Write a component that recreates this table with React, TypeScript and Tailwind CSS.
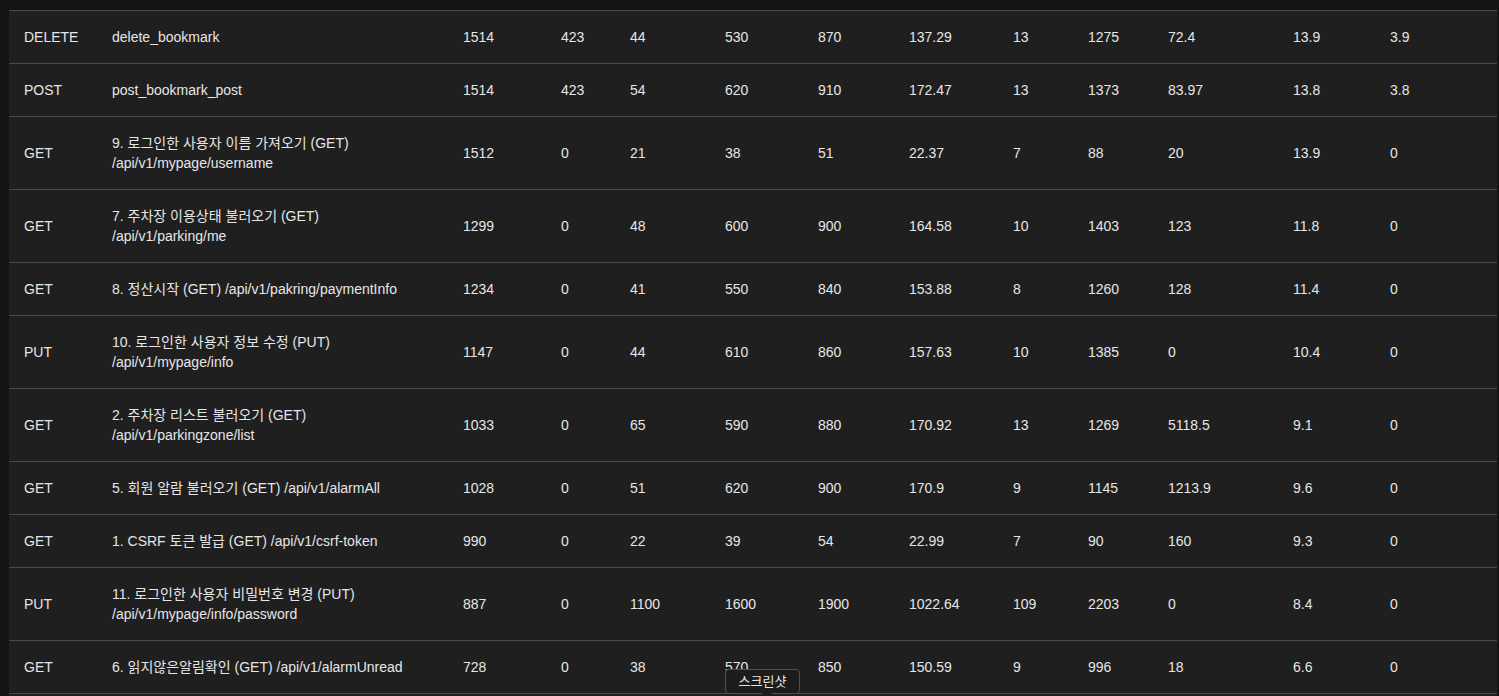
import React from "react";

type Row = { m: string; name: string[]; v: string[] };

const rows: Row[] = [
  { m: "DELETE", name: ["delete_bookmark"], v: ["1514", "423", "44", "530", "870", "137.29", "13", "1275", "72.4", "13.9", "3.9"] },
  { m: "POST", name: ["post_bookmark_post"], v: ["1514", "423", "54", "620", "910", "172.47", "13", "1373", "83.97", "13.8", "3.8"] },
  { m: "GET", name: ["9. 로그인한 사용자 이름 가져오기 (GET)", "/api/v1/mypage/username"], v: ["1512", "0", "21", "38", "51", "22.37", "7", "88", "20", "13.9", "0"] },
  { m: "GET", name: ["7. 주차장 이용상태 불러오기 (GET)", "/api/v1/parking/me"], v: ["1299", "0", "48", "600", "900", "164.58", "10", "1403", "123", "11.8", "0"] },
  { m: "GET", name: ["8. 정산시작 (GET) /api/v1/pakring/paymentInfo"], v: ["1234", "0", "41", "550", "840", "153.88", "8", "1260", "128", "11.4", "0"] },
  { m: "PUT", name: ["10. 로그인한 사용자 정보 수정 (PUT)", "/api/v1/mypage/info"], v: ["1147", "0", "44", "610", "860", "157.63", "10", "1385", "0", "10.4", "0"] },
  { m: "GET", name: ["2. 주차장 리스트 불러오기 (GET)", "/api/v1/parkingzone/list"], v: ["1033", "0", "65", "590", "880", "170.92", "13", "1269", "5118.5", "9.1", "0"] },
  { m: "GET", name: ["5. 회원 알람 불러오기 (GET) /api/v1/alarmAll"], v: ["1028", "0", "51", "620", "900", "170.9", "9", "1145", "1213.9", "9.6", "0"] },
  { m: "GET", name: ["1. CSRF 토큰 발급 (GET) /api/v1/csrf-token"], v: ["990", "0", "22", "39", "54", "22.99", "7", "90", "160", "9.3", "0"] },
  { m: "PUT", name: ["11. 로그인한 사용자 비밀번호 변경 (PUT)", "/api/v1/mypage/info/password"], v: ["887", "0", "1100", "1600", "1900", "1022.64", "109", "2203", "0", "8.4", "0"] },
  { m: "GET", name: ["6. 읽지않은알림확인 (GET) /api/v1/alarmUnread"], v: ["728", "0", "38", "570", "850", "150.59", "9", "996", "18", "6.6", "0"] },
];

const valueWidths = [
  "w-[98px]",
  "w-[69px]",
  "w-[95px]",
  "w-[93px]",
  "w-[91px]",
  "w-[104px]",
  "w-[75px]",
  "w-[80px]",
  "w-[125px]",
  "w-[97px]",
  "w-[122px]",
];

export default function App() {
  return (
    <div
      className="min-h-screen bg-[#141414] pt-[10px] pl-[9px] pr-[2px] text-[14px] leading-[20px] text-[#e6e6e6]"
      style={{ fontFamily: '"Liberation Sans", "Noto Sans CJK KR", Arial, sans-serif' }}
    >
      <div className="bg-[#1f1f1f] border-t border-[#4a4a4a] pb-[2px]">
        {rows.map((r, i) => (
          <div key={i} className="flex items-center border-b border-[#4a4a4a] py-4">
            <div className="w-[88px] shrink-0 pl-[15px] whitespace-nowrap">{r.m}</div>
            <div className="w-[351px] shrink-0 pl-[15px] whitespace-nowrap">
              {r.name.map((l, j) => (
                <div key={j}>{l}</div>
              ))}
            </div>
            {r.v.map((v, j) => (
              <div key={j} className={`${valueWidths[j]} shrink-0 pl-[15px] whitespace-nowrap`}>
                {v}
              </div>
            ))}
          </div>
        ))}
      </div>
      <div className="fixed left-[725px] top-[669px] flex h-[25px] w-[75px] items-center justify-center rounded-[4px] border border-[#4f4f4f] bg-[#1c1c1c] text-[13px] text-[#e6e6e6]">
        스크린샷
        <div className="absolute left-[36px] top-[23px] h-0 w-0 border-x-[5px] border-t-[5px] border-x-transparent border-t-[#1c1c1c]" />
      </div>
    </div>
  );
}
